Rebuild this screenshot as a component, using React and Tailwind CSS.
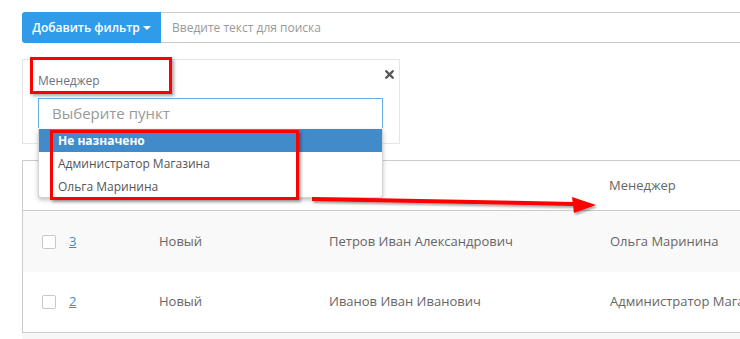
import { X } from 'lucide-react'

const ROWS = [
  { id: 3, status: 'Новый', client: 'Петров Иван Александрович', manager: 'Ольга Маринина', bg: 'bg-[#f9f9f9]' },
  { id: 2, status: 'Новый', client: 'Иванов Иван Иванович', manager: 'Администратор Магазина', bg: 'bg-white' },
]

const OPTIONS = ['Не назначено', 'Администратор Магазина', 'Ольга Маринина']

// Строка таблицы заказов
function Row({ row, last }) {
  return (
    <div className={`flex items-center text-[13px] text-[#666] ${row.bg} ${last ? 'h-[60px]' : 'h-[61px]'}`}>
      <div className="w-[19px]" />
      <div className="w-[14px] h-[14px] border border-[#c8c8c8] rounded-[2px] bg-white" />
      <a className="ml-[13px] w-[90px] text-[#3a8fd9] underline">{row.id}</a>
      <div className="w-[170px]">{row.status}</div>
      <div className="w-[281px]">{row.client}</div>
      <div className="whitespace-nowrap">{row.manager}</div>
    </div>
  )
}

export default function App() {
  return (
    <div className="relative w-[740px] h-[339px] overflow-hidden bg-white font-['Open_Sans',sans-serif]">
      <div className="w-[820px] pl-[22px] pt-[12px]">

        {/* ── Поиск ── */}
        <div className="flex h-[31px]">
          <button className="w-[139px] shrink-0 flex items-center justify-center gap-[3px] bg-[#2f9be9] rounded-l-[3px] text-white text-[12px] font-semibold">
            Добавить фильтр
            <span className="border-x-[4px] border-x-transparent border-t-[4px] border-t-white mt-[1px]" />
          </button>
          <div className="flex-1 flex items-center border-y border-[#ccc] pl-[11px] text-[12px] text-[#999]">
            Введите текст для поиска
          </div>
        </div>

        {/* ── Фильтр ── */}
        <div className="relative mt-[16px] w-[378px] h-[85px] border border-[#e6e6e6] bg-white">
          <p className="pl-[15px] pt-[11px] text-[12px] text-[#6b7480] leading-[20px]">Менеджер</p>
          <X className="absolute right-[3px] top-[8px] w-[13px] h-[13px] text-[#555]" strokeWidth={4.5} />
          <div className="relative ml-[15px] mt-[7px] w-[345px] h-[30px] border border-[#66afe9] border-b-0 flex items-center pl-[13px] text-[15px] text-[#999]">
            Выберите пункт
            <div className="absolute left-[-1px] top-[30px] w-[345px] h-[69px] bg-white rounded-b-[4px] shadow-[0_2px_4px_rgba(0,0,0,0.25)] border border-[#d5d5d5] border-t-0 z-10 text-[12px]">
              {OPTIONS.map((o, i) => (
                <div
                  key={o}
                  className={`h-[23px] flex items-center pl-[19px] ${i === 0 ? 'bg-[#428bca] text-white font-bold' : 'text-[#555]'}`}
                >
                  {o}
                </div>
              ))}
            </div>
          </div>
        </div>

        {/* ── Таблица ── */}
        <div className="mt-[16px] border-t border-l border-b border-[#ccc]">
          <div className="flex items-center h-[50px] border-b border-[#ccc] text-[13px] text-[#666]">
            <div className="ml-[586px] mt-[1px]">Менеджер</div>
          </div>
          {ROWS.map((r, i) => <Row key={r.id} row={r} last={i === ROWS.length - 1} />)}
        </div>
        <div className="h-[10px] bg-[#f7f7f7]" />
      </div>

      {/* ── Пометки ── */}
      <div className="absolute left-[30px] top-[57px] w-[142px] h-[37px] border-[3px] border-[#ff0000] shadow-[2px_2px_3px_rgba(0,0,0,0.35)] z-20" />
      <div className="absolute left-[50px] top-[130px] w-[249px] h-[70px] border-[3px] border-[#ff0000] shadow-[2px_2px_3px_rgba(0,0,0,0.35)] z-20" />
      <svg className="absolute left-0 top-0 z-20" width="740" height="339">
        <defs>
          <filter id="sh" x="-5%" y="-50%" width="110%" height="200%">
            <feDropShadow dx="1.5" dy="2" stdDeviation="1.2" floodOpacity="0.35" />
          </filter>
        </defs>
        <g filter="url(#sh)" fill="#ff0000">
          <polygon points="312,197 574,202 574,206 312,201" />
          <polygon points="572,197 596,205 574,213" />
        </g>
      </svg>
    </div>
  )
}
